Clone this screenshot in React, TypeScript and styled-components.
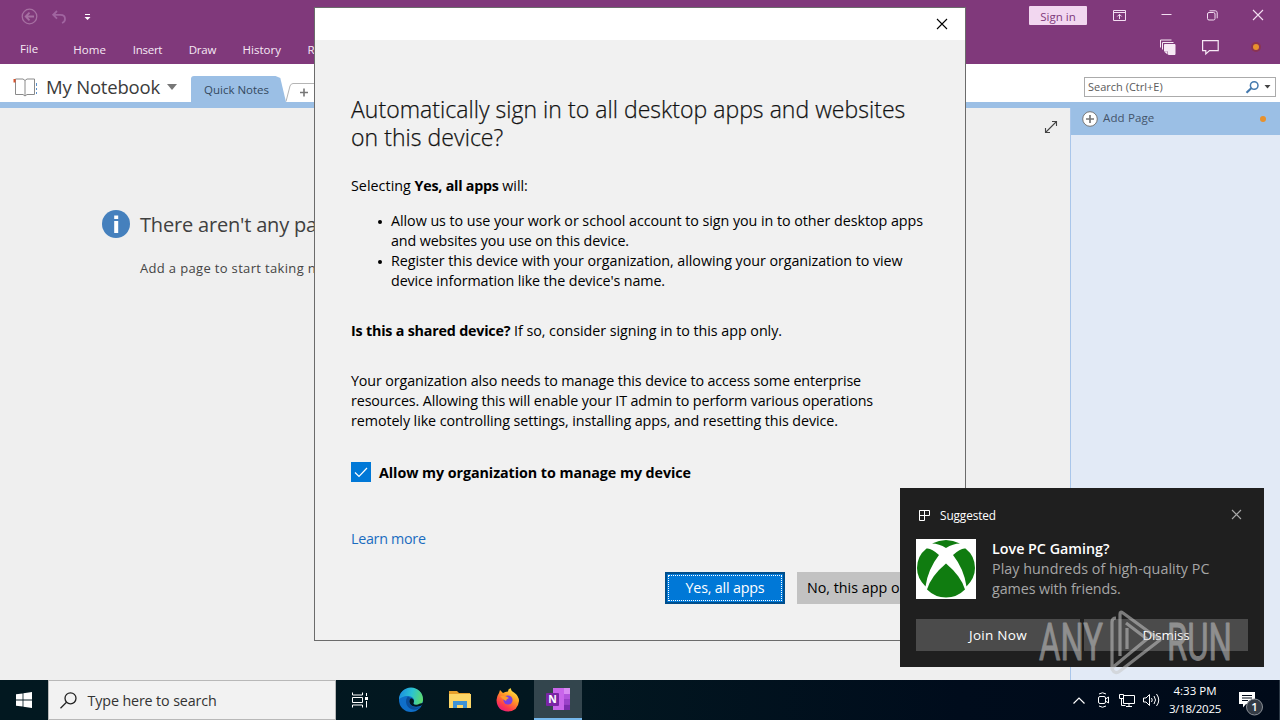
import React from "react";
import styled, { createGlobalStyle } from "styled-components";

const GlobalStyle = createGlobalStyle`
  * { box-sizing: border-box; }
  body { margin: 0; font-family: "Open Sans", "Noto Sans", sans-serif; overflow: hidden; }
  button { font: inherit; border: 0; padding: 0; }
  svg { display: block; flex: none; overflow: visible; }
`;

const Desktop = styled.div`
  position: relative;
  width: 1280px;
  height: 720px;
  overflow: hidden;
  display: flex;
  flex-direction: column;
`;

const Run = styled.span<{ $track: number }>`
  letter-spacing: ${(p) => p.$track}px;
  white-space: pre;
`;

const Header = styled.header`
  flex: none;
  height: 64px;
  background: #80397b;
  color: #f6e9f5;
  display: flex;
  justify-content: space-between;
`;

const HeaderSide = styled.div`
  display: flex;
  flex-direction: column;
`;

const QuickAccess = styled.div`
  height: 33px;
  display: flex;
  align-items: center;
  gap: 14px;
  padding-left: 21px;
`;

const CustomizeCaret = styled.svg`
  margin-left: 4px;
`;

const RibbonTabs = styled.nav`
  display: flex;
  gap: 26.5px;
  padding-left: 20px;
  font-size: 11.5px;
  line-height: 16px;
  padding-top: 9px;
`;

const FileTab = styled.span`
  margin-right: 8.5px;
  margin-top: -1px;
`;

const CaptionRow = styled.div`
  height: 31px;
  display: flex;
  align-items: center;
  padding-right: 17px;
`;

const SignIn = styled.button`
  width: 58px;
  height: 19px;
  margin-right: 26px;
  border-radius: 1px;
  background: #f2d7f0;
  color: #80397b;
  font-size: 11.5px;
  line-height: 21px;
`;

const CaptionIcons = styled.div`
  display: flex;
  align-items: center;
  gap: 35px;
`;

const RibbonIcons = styled.div`
  display: flex;
  justify-content: flex-end;
  align-items: center;
  height: 34px;
  gap: 26px;
  padding-right: 21px;
`;

const NotebookBar = styled.div`
  flex: none;
  height: 44px;
  background: #fff;
  border-bottom: 6px solid #9bbfe5;
  display: flex;
  align-items: flex-end;
`;

const NotebookPicker = styled.div`
  display: flex;
  align-items: center;
  height: 30px;
  width: 191px;
  padding-left: 13px;
  color: #3b3b3b;
  font-size: 18.5px;
`;

const NotebookName = styled.span`
  margin-left: 8px;
  margin-right: 7px;
  line-height: 28px;
`;

const SectionTab = styled.div`
  width: 95px;
  height: 26px;
  border-radius: 3px 6px 0 0;
  background: #9bbfe5;
  color: #34495e;
  font-size: 11.5px;
  line-height: 27px;
  padding-left: 13px;
  clip-path: polygon(0 0, 89% 0, 94% 8%, 100% 100%, 0 100%);
`;

const SearchBox = styled.div`
  margin: 0 4px 5px auto;
  width: 192px;
  height: 20px;
  border: 1px solid #ababab;
  display: flex;
  align-items: center;
  padding: 0 2px 0 3px;
  color: #5a5a5a;
  font-size: 11px;
`;

const SearchText = styled.span`
  flex: 1;
  line-height: 18px;
`;

const Workspace = styled.main`
  flex: 1;
  display: flex;
`;

const Canvas = styled.section`
  position: relative;
  width: 1070px;
  background: #efefef;
  padding: 102px 0 0 102px;
`;

const ExpandIcon = styled.div`
  position: absolute;
  right: 13px;
  top: 13px;
`;

const EmptyTitle = styled.div`
  display: flex;
  align-items: center;
  gap: 10px;
  height: 28px;
  font-size: 20px;
  line-height: 28px;
  color: #404040;
`;

const EmptyText = styled.span`
  padding-top: 2px;
`;

const EmptyHint = styled.div`
  margin: 20px 0 0 38px;
  font-size: 13px;
  line-height: 20px;
  color: #444;
`;

const PagePane = styled.aside`
  flex: 1;
  background: #e2eaf6;
  border-left: 1px solid #a9c6ea;
`;

const AddPage = styled.div`
  height: 27px;
  background: #9bbfe5;
  display: flex;
  align-items: center;
  padding: 0 14px 5px 11px;
  gap: 5px;
  color: #44546a;
  font-size: 11.5px;
  line-height: 16px;
`;

const AddPageLabel = styled.span`
  margin-top: -2px;
`;

const Dot = styled.i<{ $ring?: boolean }>`
  width: 6px;
  height: 6px;
  border-radius: 50%;
  background: #e8912d;
  box-shadow: ${(p) => (p.$ring ? "0 0 0 2px #93302f88" : "none")};
  margin-left: ${(p) => (p.$ring ? "8px" : "auto")};
`;

const Dialog = styled.section`
  position: absolute;
  left: 314px;
  top: 7px;
  width: 652px;
  height: 634px;
  border: 1px solid #6b6b6b;
  background: #f1f1f1;
  color: #000;
  font-size: 14.3px;
  line-height: 20px;
`;

const DialogBar = styled.div`
  height: 32px;
  background: #fff;
  display: flex;
  align-items: center;
  justify-content: flex-end;
  padding-right: 18px;
`;

const DialogBody = styled.div`
  padding: 55px 36px 0;
  display: flex;
  flex-direction: column;
`;

const Title = styled.h1`
  margin: 0 0 25px;
  font-size: 23px;
  font-weight: 300;
  line-height: 28px;
  color: #111;
  -webkit-text-stroke: 0.25px #111;
`;

const Line = styled.div`
  white-space: pre;
`;

const Bullets = styled.ul`
  margin: 15px 0 30px;
  padding: 0 0 0 40px;
  list-style: none;
`;

const Bullet = styled.li`
  &::before {
    content: "";
    float: left;
    width: 4px;
    height: 4px;
    border-radius: 50%;
    background: #000;
    margin: 9px 0 0 -13px;
  }
`;

const Paragraph = styled.div`
  margin-top: 30px;
`;

const ConsentRow = styled.label`
  margin-top: 31px;
  height: 20px;
  display: flex;
  gap: 8px;
  font-weight: 700;
  line-height: 22px;
`;

const CheckBox = styled.span`
  width: 20px;
  height: 20px;
  background: #0078d7;
`;

const LearnMore = styled.a`
  margin-top: 47px;
  color: #1a6cc0;
`;

const DialogActions = styled.div`
  display: flex;
  justify-content: flex-end;
  gap: 12px;
  margin-top: 23px;
`;

const Action = styled.button<{ $primary?: boolean }>`
  width: ${(p) => (p.$primary ? 120 : 132)}px;
  height: 32px;
  font-size: 14.3px;
  background: ${(p) => (p.$primary ? "#0078d7" : "#c2c2c2")};
  color: ${(p) => (p.$primary ? "#fff" : "#000")};
  border: ${(p) => (p.$primary ? "2px solid #004e8c" : "0")};
  outline: ${(p) => (p.$primary ? "1px dotted #fff" : "0")};
  outline-offset: -4px;
  line-height: ${(p) => (p.$primary ? 28 : 32)}px;
`;

const Toast = styled.section`
  position: absolute;
  left: 900px;
  top: 488px;
  width: 364px;
  height: 179px;
  background: #1f1f1f;
  color: #fff;
  padding: 17px 16px 16px;
  font-size: 14.3px;
  line-height: 20px;
`;

const ToastHead = styled.div`
  display: flex;
  align-items: center;
  height: 20px;
  padding: 0 7px 0 3px;
  font-size: 11.8px;
  gap: 10px;
`;

const ToastClose = styled.span`
  margin: -2px 0 0 auto;
`;

const ToastContent = styled.div`
  display: flex;
  gap: 16px;
  margin-top: 14px;
`;

const ToastTitle = styled.div`
  font-weight: 600;
`;

const ToastText = styled.div`
  color: #a6a6a6;
`;

const ToastActions = styled.div`
  display: flex;
  gap: 4px;
  margin-top: 20px;
`;

const ToastButton = styled.button`
  flex: 1;
  height: 32px;
  background: #4b4b4b;
  color: #fff;
  font-size: 13.5px;
  line-height: 32px;
`;

const Watermark = styled.div`
  position: absolute;
  left: 1036px;
  top: 606px;
  opacity: 0.55;
  pointer-events: none;
`;

const Taskbar = styled.footer`
  flex: none;
  height: 40px;
  display: flex;
  background: linear-gradient(90deg, #021820 0%, #021720 45%, #000c1c 75%, #000a19 100%);
  color: #fff;
`;

const TaskSlot = styled.div<{ $active?: boolean; $w: number }>`
  width: ${(p) => p.$w}px;
  height: 40px;
  display: flex;
  align-items: center;
  justify-content: center;
  background: ${(p) => (p.$active ? "#33454d" : "transparent")};
  border-bottom: ${(p) => (p.$active ? "2px solid #76b9ed" : "0")};
`;

const TaskSearch = styled.div`
  width: 288px;
  height: 40px;
  background: #f2f2f2;
  border: 1px solid #b8b8b8;
  color: #333;
  font-size: 14.3px;
  display: flex;
  align-items: center;
  padding-left: 11px;
  gap: 10.5px;
`;

const Tray = styled.div`
  margin-left: auto;
  display: flex;
  align-items: center;
`;

const TrayIcons = styled.div`
  display: flex;
  align-items: center;
  gap: 8px;
  margin-right: 9px;
`;

const TrayCaret = styled.svg`
  margin-right: 2px;
`;

const Clock = styled.div`
  width: 52px;
  text-align: center;
  font-size: 11.5px;
  line-height: 18px;
`;

const Notices = styled.div`
  width: 46px;
  margin-left: 13px;
  padding-left: 5px;
  border-right: 1px solid #2c3845;
  height: 40px;
  display: flex;
  align-items: center;
`;

const Cross = ({ s, c, w = 1.1 }: { s: number; c: string; w?: number }) => (
  <svg width={s} height={s} viewBox="0 0 10 10" stroke={c} strokeWidth={(w * 10) / s} fill="none">
    <path d="M0 0L10 10M10 0L0 10" />
  </svg>
);

const ribbon: [string, number][] = [["Home", 0.12], ["Insert", -0.25], ["Draw", -0.25], ["History", 0.02], ["Review", 0]];

function OneNoteHeader() {
  return (
    <Header>
      <HeaderSide>
        <QuickAccess>
          <svg width="17" height="17" viewBox="0 0 17 17" fill="none" stroke="#a670a2" strokeWidth="1.3">
            <circle cx="8.5" cy="8.5" r="7.3" />
            <path d="M13 8.5H4.8M8.5 4.7L4.7 8.5l3.8 3.8" strokeWidth="1.8" />
          </svg>
          <svg width="14" height="14" viewBox="0 0 14 14" fill="none" stroke="#a065a0" strokeWidth="1.8">
            <path d="M5 1L1.2 4.8L5 8.6M1.5 4.8H8.5C11.5 4.8 13 6.5 13 9C13 11 12 12.3 10 13" />
          </svg>
          <CustomizeCaret width="7" height="8" viewBox="0 0 7 8" fill="#fff">
            <path d="M1 1h5v1H1zM0.5 4h6L3.5 7z" />
          </CustomizeCaret>
        </QuickAccess>
        <RibbonTabs>
          <FileTab>File</FileTab>
          {ribbon.map(([t, k]) => (
            <Run key={t} $track={k}>{t}</Run>
          ))}
        </RibbonTabs>
      </HeaderSide>
      <HeaderSide>
        <CaptionRow>
          <SignIn>Sign in</SignIn>
          <CaptionIcons>
            <svg width="13" height="11" viewBox="0 0 13 11" fill="none" stroke="#f3def2">
              <path d="M.5 .5h12v10H.5zM.5 2.5h12M6.5 9V4.5M4.3 6.5L6.5 4.3L8.7 6.5" />
            </svg>
            <svg width="11" height="11" viewBox="0 0 11 11" stroke="#f3def2"><path d="M.5 4.5h10" /></svg>
            <svg width="11" height="11" viewBox="0 0 11 11" fill="none" stroke="#f3def2">
              <rect x=".5" y="2.5" width="7.5" height="7.5" rx="1.5" />
              <path d="M2.5 .8h5.700a2 2 0 0 1 2 2v5.500" />
            </svg>
            <Cross s={10} c="#f3def2" />
          </CaptionIcons>
        </CaptionRow>
        <RibbonIcons>
          <svg width="17" height="16" viewBox="0 0 17 16" fill="none" stroke="#f6e9f5">
            <path d="M1.500 8.500v-7.500h11M3.500 10.500V3.500h11" />
            <path d="M5.500 5.500h10.500v10H9.500v-3.500h-4z" fill="#f6e9f5" />
            <path d="M5 12.500l3.500 3v-3z" fill="#f6e9f5" stroke="none" />
          </svg>
          <svg width="17" height="15" viewBox="0 0 17 15" fill="none" stroke="#f6e9f5" strokeWidth="1.200">
            <path d="M.6 .6h15.600v10H7.500L3.800 14v-3.400H.6z" />
          </svg>
          <Dot $ring />
        </RibbonIcons>
      </HeaderSide>
    </Header>
  );
}

function Sections() {
  return (
    <NotebookBar>
      <NotebookPicker>
        <svg width="25" height="20" viewBox="0 0 25 20" fill="none" stroke="#8a8a8a">
          <path d="M2.500 2H10l2 1.500L14 2h7.500v15.500H14l-2 1.500-2-1.500H2.500zM12 3.500V19" />
          <path d="M1.500 2v3.500" stroke="#d9532c" strokeWidth="2" />
          <path d="M23.500 6v3M23.500 11v2M23.500 15v2" stroke="#5b8fc7" />
        </svg>
        <NotebookName><Run $track={-0.19}>My Notebook</Run></NotebookName>
        <svg width="10" height="6" viewBox="0 0 10 6" fill="#777"><path d="M0 0h10L5 6z" /></svg>
      </NotebookPicker>
      <SectionTab>Quick Notes</SectionTab>
      <svg width="36" height="19" viewBox="0 0 36 19" fill="none">
        <path d="M0 18.500L4 3Q5 .5 7 .5H36" stroke="#b5b5b5" />
        <path d="M14 9.500h8M18 5.500v8" stroke="#777" strokeWidth="1.600" />
      </svg>
      <SearchBox>
        <SearchText>Search (Ctrl+E)</SearchText>
        <svg width="14" height="13" viewBox="0 0 14 13" fill="none" stroke="#4479ad">
          <circle cx="9.200" cy="4.500" r="3.800" strokeWidth="1.500" />
          <path d="M6.200 7.300L1.500 11.700" strokeWidth="2.200" />
        </svg>
        <svg width="14" height="4" viewBox="0 0 14 4" fill="#444"><path d="M5.500 0h6L8.500 3.500z" /></svg>
      </SearchBox>
    </NotebookBar>
  );
}

function SignInDialog() {
  return (
    <Dialog>
      <DialogBar><Cross s={10} c="#000" /></DialogBar>
      <DialogBody>
        <Title>
          <Line><Run $track={0.035}>Automatically sign in to all desktop apps and websites</Run></Line>
          <Line><Run $track={0.05}>on this device?</Run></Line>
        </Title>
        <Line>
          <Run $track={0.03}>Selecting </Run><b><Run $track={-0.24}>Yes, all apps</Run></b><Run $track={-0.05}> will:</Run>
        </Line>
        <Bullets>
          <Bullet>
            <Line><Run $track={-0.045}>Allow us to use your work or school account to sign you in to other desktop apps</Run></Line>
            <Line><Run $track={-0.11}>and websites you use on this device.</Run></Line>
          </Bullet>
          <Bullet>
            <Line><Run $track={-0.055}>Register this device with your organization, allowing your organization to view</Run></Line>
            <Line><Run $track={-0.109}>device information like the device's name.</Run></Line>
          </Bullet>
        </Bullets>
        <Line>
          <b><Run $track={-0.2}>Is this a shared device?</Run></b><Run $track={-0.038}> If so, consider signing in to this app only.</Run>
        </Line>
        <Paragraph>
          <Line><Run $track={-0.121}>Your organization also needs to manage this device to access some enterprise</Run></Line>
          <Line><Run $track={-0.121}>resources. Allowing this will enable your IT admin to perform various operations</Run></Line>
          <Line><Run $track={-0.077}>remotely like controlling settings, installing apps, and resetting this device.</Run></Line>
        </Paragraph>
        <ConsentRow>
          <CheckBox>
            <svg width="20" height="20" viewBox="0 0 20 20" fill="none" stroke="#fff" strokeWidth="1.200">
              <path d="M4 10.500L8 14.500L16 6" />
            </svg>
          </CheckBox>
          <Run $track={-0.064}>Allow my organization to manage my device</Run>
        </ConsentRow>
        <LearnMore><Run $track={-0.28}>Learn more</Run></LearnMore>
        <DialogActions>
          <Action $primary><Run $track={-0.18}>Yes, all apps</Run></Action>
          <Action><Run $track={0}>No, this app only</Run></Action>
        </DialogActions>
      </DialogBody>
    </Dialog>
  );
}

function SuggestedToast() {
  return (
    <Toast>
      <ToastHead>
        <svg width="11" height="11" viewBox="0 0 11 11" fill="none" stroke="#fff">
          <path d="M.5 .5h10v5H.5zM.5 .5v10h5V.5" />
        </svg>
        <Run $track={-0.09}>Suggested</Run>
        <ToastClose><Cross s={9} c="#a8a8a8" /></ToastClose>
      </ToastHead>
      <ToastContent>
        <svg width="60" height="60" viewBox="0 0 60 60">
          <path d="M0 0h60v60H0z" fill="#fff" />
          <g fill="#107c10">
            <path d="M16 4.500Q30-2.500 44 4.500Q37 4.500 30 9Q23 4.500 16 4.500Z" />
            <path d="M10.500 9.500Q15 8.500 23 16Q12 30 9.500 47.500Q1 39 1 29Q1 17 10.500 9.500Z" />
            <path d="M49.500 9.500Q45 8.500 37 16Q48 30 50.500 47.500Q59 39 59 29Q59 17 49.500 9.500Z" />
            <path d="M30 24.500Q45 37 49 50.500Q41 58.500 30 58.500Q19 58.500 11 50.500Q15 37 30 24.500Z" />
          </g>
        </svg>
        <div>
          <ToastTitle>Love PC Gaming?</ToastTitle>
          <ToastText><Run $track={0.043}>Play hundreds of high-quality PC</Run></ToastText>
          <ToastText><Run $track={-0.08}>games with friends.</Run></ToastText>
        </div>
      </ToastContent>
      <ToastActions>
        <ToastButton><Run $track={0.28}>Join Now</Run></ToastButton>
        <ToastButton><Run $track={-0.2}>Dismiss</Run></ToastButton>
      </ToastActions>
    </Toast>
  );
}

function AnyRunMark() {
  return (
    <Watermark>
      <svg width="198" height="68" viewBox="0 0 198 68" fill="none" stroke="#c8c8c8" strokeLinejoin="round">
        <g fill="#c8c8c8" strokeWidth="0.900" fontFamily="Roboto, sans-serif" fontSize="52">
          <text x="3" y="54" textLength="64" lengthAdjust="spacingAndGlyphs">ANY</text>
          <text x="131" y="54" textLength="65" lengthAdjust="spacingAndGlyphs">RUN</text>
        </g>
        <path d="M84 50V8Q84 5 87 7L124 34L84 65Q79 69 76 63V16Q76 12 80 12M90 17L111 33L76 62M91 22V43" strokeWidth="3.200" />
      </svg>
    </Watermark>
  );
}

function WindowsTaskbar() {
  return (
    <Taskbar>
      <TaskSlot $w={48}>
        <svg width="16" height="16" viewBox="0 0 16 16" fill="#fff">
          <path d="M0 2.300L6.600 1.400V7.500H0zM7.400 1.300L16 0V7.500H7.400zM0 8.400H6.600V14.600L0 13.700zM7.400 8.400H16V16L7.400 14.700z" />
        </svg>
      </TaskSlot>
      <TaskSearch>
        <svg width="17" height="17" viewBox="0 0 17 17" fill="none" stroke="#222" strokeWidth="1.300">
          <circle cx="10.500" cy="6.300" r="5.500" />
          <path d="M6.500 10.300L.5 16.300" />
        </svg>
        <Run $track={-0.13}>Type here to search</Run>
      </TaskSearch>
      <TaskSlot $w={48}>
        <svg width="16" height="16" viewBox="0 0 16 16" fill="none" stroke="#fff">
          <path d="M.5 .5v2.500h10V.5M.5 5.500h10v5H.5zM.5 15.500V13h10v2.500M14.500 1v3M14.500 9v6.500" />
          <path d="M13 5h3v3h-3z" fill="#fff" stroke="none" />
        </svg>
      </TaskSlot>
      <TaskSlot $w={54}>
        <svg width="24" height="24" viewBox="0 0 24 24">
          <defs>
            <linearGradient id="edgeTop" x1="0" y1=".4" x2="1" y2=".6">
              <stop offset="0" stopColor="#1b8fe0" /><stop offset=".5" stopColor="#2bc3d2" /><stop offset="1" stopColor="#5fdc6a" />
            </linearGradient>
          </defs>
          <circle cx="12" cy="12" r="12" fill="#0f6fc9" />
          <path d="M0 11.500A12 12 0 0 1 24 11.500C24 15.500 21 17 18 17C15 17 14 16 14.500 15C16.500 12 14 8 9 8C4.500 8 1 10 0 11.500Z" fill="url(#edgeTop)" />
          <path d="M9 8.500C6 11 6 18 12 21C16 23 20 21 22 18.500C17 21 10.500 18 10 13.500C10 11 12 10.500 12.500 10.500Z" fill="#0a4e9b" />
          <path d="M12.500 10.300C9.500 11 9.500 16 13.500 18C17 19.500 21 18.300 22.800 17.300L24.500 15L21 15.500C18 17.500 14 17 14.500 15C15.500 13.500 15 11 12.500 10.300Z" fill="#021720" />
        </svg>
      </TaskSlot>
      <TaskSlot $w={44}>
        <svg width="22" height="20" viewBox="0 0 22 20">
          <path d="M0 1h8l2 2h11v5H0z" fill="#e6a02c" />
          <path d="M0 4h22v14H0z" fill="#fcd667" />
          <path d="M4 18v-7h14v7h-4v-3H8v3z" fill="#3d92d6" />
        </svg>
      </TaskSlot>
      <TaskSlot $w={52}>
        <svg width="24" height="24" viewBox="0 0 24 24">
          <defs>
            <linearGradient id="fox" x1=".8" y1="0" x2=".2" y2="1">
              <stop offset="0" stopColor="#fff04a" /><stop offset=".4" stopColor="#ff9a25" /><stop offset=".75" stopColor="#ff3b4a" /><stop offset="1" stopColor="#e31587" />
            </linearGradient>
          </defs>
          <path d="M3 5L4 2L7 5Q9 3.500 12 3.500Q12 1 14.500 0Q15 3 18 4.500Q23 8 23 13Q22 23 12 23.500Q1 23 .5 12Q.8 8 3 5Z" fill="url(#fox)" />
          <circle cx="12" cy="12" r="4.600" fill="#7a3fe0" />
          <path d="M4 8Q9 7 13 10Q10 11 10 13Q7 12 4 8Z" fill="#ff9b2b" />
        </svg>
      </TaskSlot>
      <TaskSlot $active $w={48}>
        <svg width="24" height="22" viewBox="0 0 24 22">
          <path d="M7 0h17v22H7z" fill="#c965eb" />
          <path d="M18 0h6v6h-6z" fill="#d98af3" /><path d="M18 6h6v5h-6z" fill="#b254dc" /><path d="M18 11h6v5.500h-6z" fill="#9a41c9" /><path d="M18 16.500h6V22h-6z" fill="#7b2cae" />
          <rect x="0" y="5" width="13" height="13" rx="1" fill="#7a24a5" />
          <text x="6.500" y="15.300" fill="#fff" fontSize="10.500" fontWeight="700" textAnchor="middle">N</text>
        </svg>
      </TaskSlot>
      <Tray>
        <TrayIcons>
          <TrayCaret width="12" height="7" viewBox="0 0 12 7" fill="none" stroke="#fff" strokeWidth="1.200"><path d="M.5 6.500L6 1l5.500 5.500" /></TrayCaret>
          <svg width="16" height="16" viewBox="0 0 16 16" fill="none" stroke="#fff">
            <rect x="3.500" y="4.500" width="7" height="7" rx="1.500" />
            <path d="M10.500 7l3-2v6l-3-2M4 2Q7.500-.5 11 2M4 14Q7.500 16.500 11 14" />
          </svg>
          <svg width="16" height="15" viewBox="0 0 16 15" fill="none" stroke="#fff">
            <path d="M4.500 2.500h11v8H4.500zM7 13.500h6M10 10.500v3M.5 1.500h4v4h-4zM2.500 5.500v7h4" />
          </svg>
          <svg width="17" height="14" viewBox="0 0 17 14" fill="none" stroke="#fff">
            <path d="M.5 5h2.500L6.500 1.500v11L3 9H.5zM8.500 5q1.500 2 0 4M11 3q3 4 0 8M13.500 1q4.500 6 0 12" />
          </svg>
        </TrayIcons>
        <Clock>
          <div>4:33 PM</div>
          <Run $track={-0.27}>3/18/2025</Run>
        </Clock>
        <Notices>
          <svg width="26" height="26" viewBox="0 0 26 26">
            <path d="M0 5h16v12H7l-3 3.500V17H0z" fill="#fff" />
            <path d="M3 8.500h10M3 11h10M3 13.500h6" stroke="#000a19" />
            <circle cx="15.500" cy="20" r="8" fill="#343b45" stroke="#8a8f96" />
            <text x="15.500" y="24" fill="#fff" fontSize="11.500" fontWeight="600" textAnchor="middle">1</text>
          </svg>
        </Notices>
      </Tray>
    </Taskbar>
  );
}

export default function App() {
  return (
    <Desktop>
      <GlobalStyle />
      <OneNoteHeader />
      <Sections />
      <Workspace>
        <Canvas>
          <ExpandIcon>
            <svg width="12" height="12" viewBox="0 0 12 12" fill="none" stroke="#444" strokeWidth="1.100">
              <path d="M.5 11.500L11.500 .5M7 .5h4.500V5M.5 7v4.500H5" />
            </svg>
          </ExpandIcon>
          <EmptyTitle>
            <svg width="28" height="28" viewBox="0 0 28 28">
              <circle cx="14" cy="14" r="14" fill="#4580bd" />
              <path d="M12.200 11h4v12h-4zM12.200 5.500h4V9h-4z" fill="#fff" />
            </svg>
            <EmptyText><Run $track={-0.19}>There aren't any pages here.</Run></EmptyText>
          </EmptyTitle>
          <EmptyHint><Run $track={0.34}>Add a page to start taking notes.</Run></EmptyHint>
        </Canvas>
        <PagePane>
          <AddPage>
            <svg width="16" height="16" viewBox="0 0 16 16">
              <circle cx="8" cy="8" r="7.300" fill="#fff" stroke="#777" />
              <path d="M4 8h8M8 4v8" stroke="#777" strokeWidth="1.700" />
            </svg>
            <AddPageLabel><Run $track={0.14}>Add Page</Run></AddPageLabel>
            <Dot />
          </AddPage>
        </PagePane>
      </Workspace>
      <WindowsTaskbar />
      <SignInDialog />
      <SuggestedToast />
      <AnyRunMark />
    </Desktop>
  );
}
